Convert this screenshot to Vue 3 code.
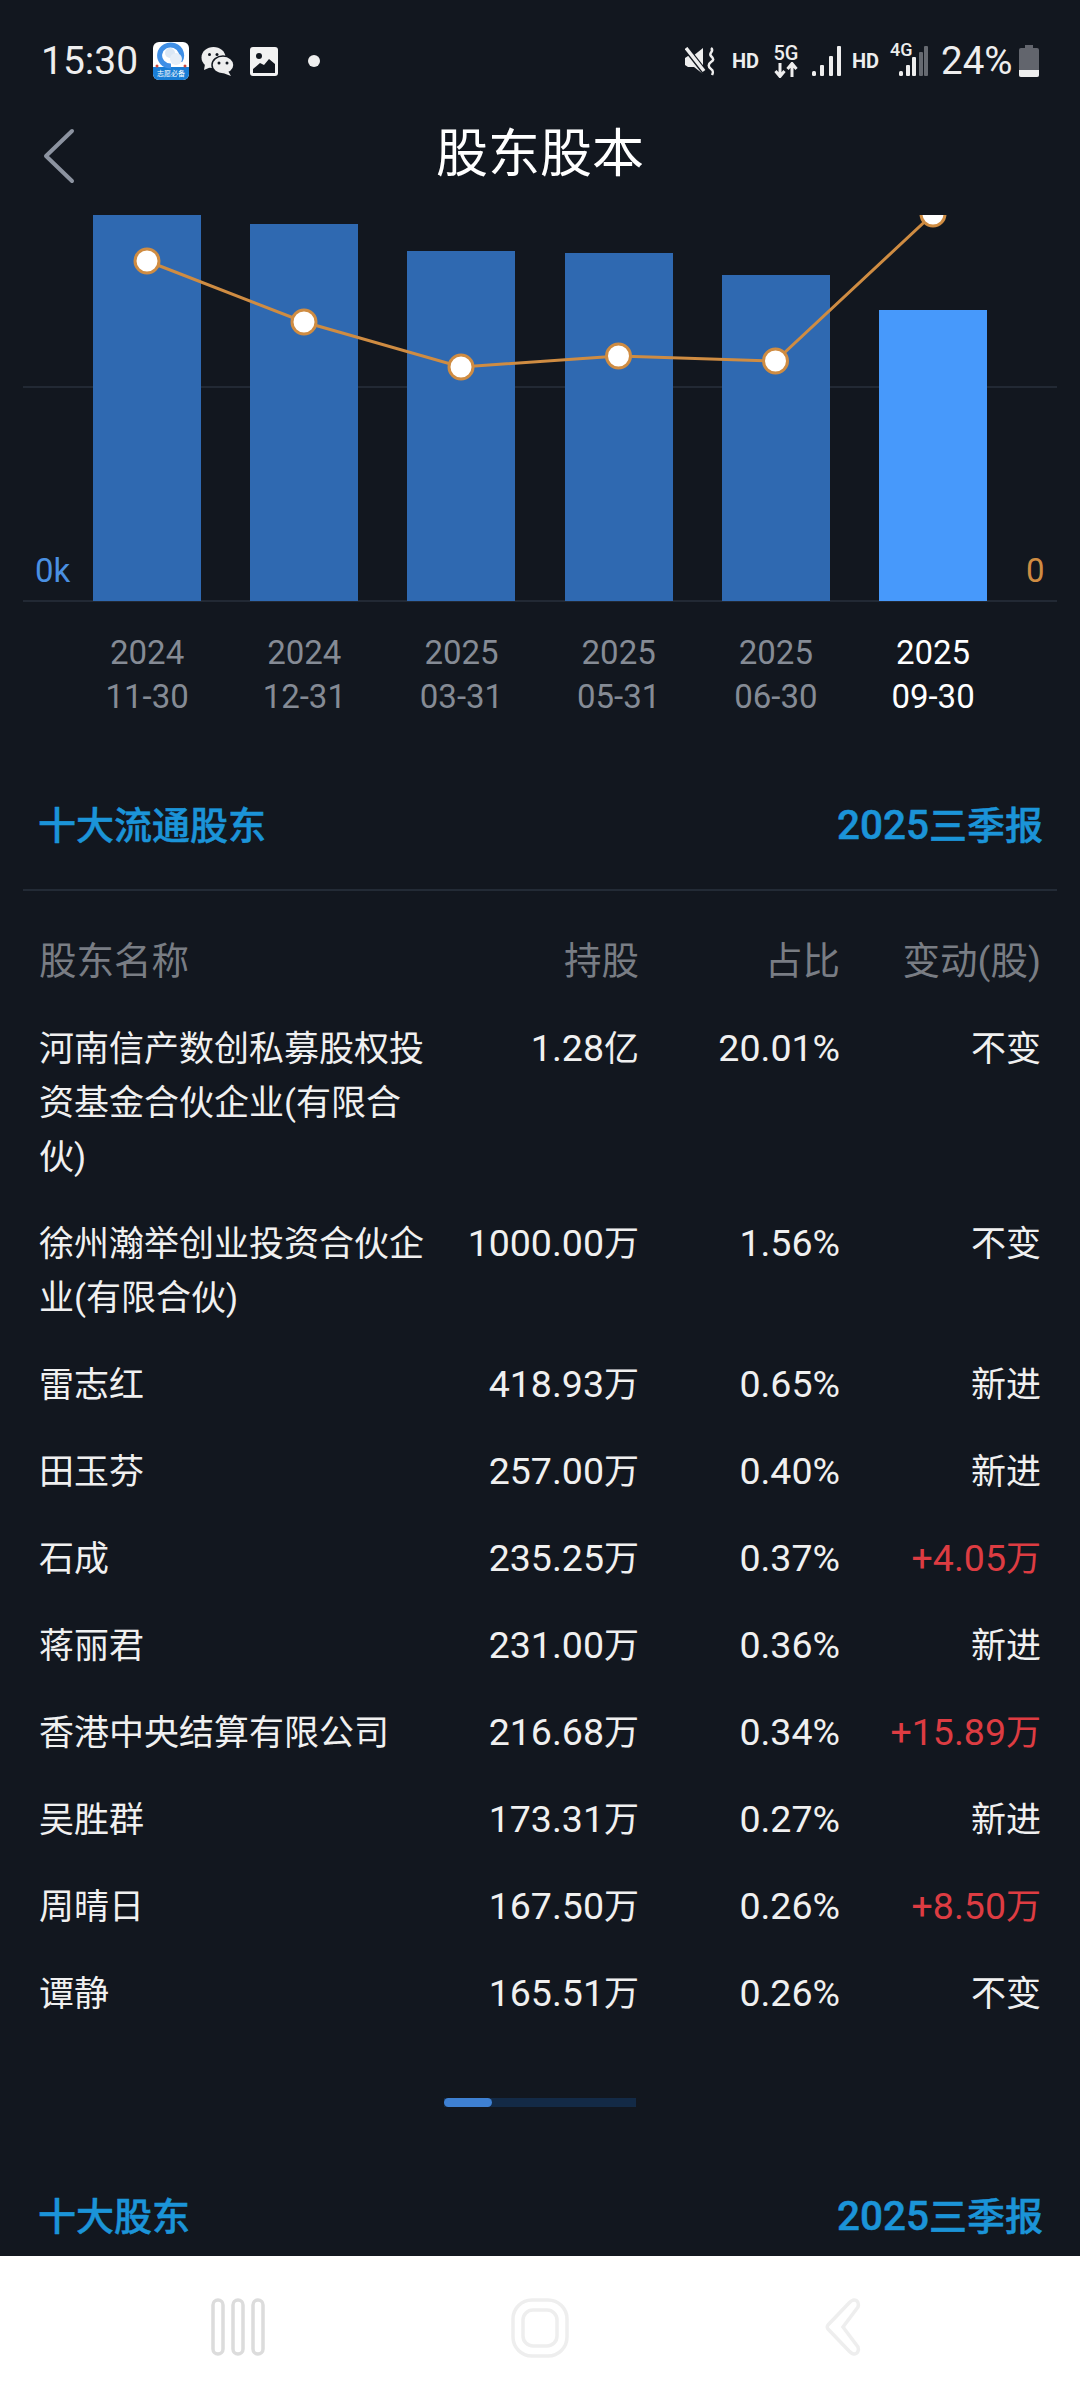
<script setup>
const bars = [
  { top: 0, y: '2024', d: '11-30' },
  { top: 9, y: '2024', d: '12-31' },
  { top: 36, y: '2025', d: '03-31' },
  { top: 38, y: '2025', d: '05-31' },
  { top: 60, y: '2025', d: '06-30' },
  { top: 95, y: '2025', d: '09-30', on: true }
]
const split = (s) => {
  const m = s.match(/^([^\u4e00-\u9fff]*)(.*)$/)
  return { num: m[1], unit: m[2] }
}
const rows = [
  { n: '河南信产数创私募股权投资基金合伙企业(有限合伙)', h: '1.28亿', p: '20.01%', c: '不变' },
  { n: '徐州瀚举创业投资合伙企业(有限合伙)', h: '1000.00万', p: '1.56%', c: '不变' },
  { n: '雷志红', h: '418.93万', p: '0.65%', c: '新进' },
  { n: '田玉芬', h: '257.00万', p: '0.40%', c: '新进' },
  { n: '石成', h: '235.25万', p: '0.37%', c: '+4.05万', r: true },
  { n: '蒋丽君', h: '231.00万', p: '0.36%', c: '新进' },
  { n: '香港中央结算有限公司', h: '216.68万', p: '0.34%', c: '+15.89万', r: true },
  { n: '吴胜群', h: '173.31万', p: '0.27%', c: '新进' },
  { n: '周晴日', h: '167.50万', p: '0.26%', c: '+8.50万', r: true },
  { n: '谭静', h: '165.51万', p: '0.26%', c: '不变' }
]
</script>

<template>
  <div class="page">
    <header class="status">
      <div class="st-left">
        <span class="time">15:30</span>
        <svg class="ic" width="36" height="38" viewBox="0 0 36 38"><rect width="36" height="38" rx="6" fill="#fff"/><path d="M0 25h36v7a6 6 0 0 1-6 6H6a6 6 0 0 1-6-6z" fill="#1a7ed6"/><path d="M27 19a11 10.500 0 1 0-9 5" fill="none" stroke="#3f8fe6" stroke-width="5"/><circle cx="17" cy="11" r="5" fill="#dbe7f4"/><circle cx="23" cy="17" r="6" fill="#e6eef7"/><circle cx="4" cy="24" r="1.500" fill="#d0473a"/><circle cx="32" cy="24" r="1.500" fill="#d0473a"/><text x="18" y="34" class="qq-t" text-anchor="middle">志愿必备</text></svg>
        <svg class="ic wc" width="33" height="29" viewBox="0 0 33 29"><ellipse cx="12.500" cy="10.500" rx="12" ry="10.500" fill="#eee"/><path d="M4 17l-1 6 7-3z" fill="#eee"/><ellipse cx="22" cy="18" rx="11" ry="9" fill="#eee" stroke="#12171f" stroke-width="1.500"/><path d="M27 24l3 5-8-3z" fill="#eee"/><circle cx="8.500" cy="7.500" r="1.500" fill="#12171f"/><circle cx="16" cy="7.500" r="1.500" fill="#12171f"/><circle cx="18" cy="16" r="1.500" fill="#12171f"/><circle cx="26" cy="16" r="1.500" fill="#12171f"/></svg>
        <svg class="ic im" width="28" height="29" viewBox="0 0 28 29"><rect width="28" height="29" rx="3" fill="#f2f2f2"/><circle cx="9" cy="9" r="3" fill="#12171f"/><path d="M3 26v-4l7-6 4 2 5-6 6 5v9z" fill="#12171f"/></svg>
        <span class="dot"></span>
      </div>
      <div class="st-right">
        <svg class="mute" width="30" height="29" viewBox="0 0 30 29"><path d="M0 11l3-2h5l10-8v26l-9-7H3l-3-2z" fill="#eee"/><path d="M0 0l22 28" stroke="#12171f" stroke-width="6"/><path d="M1 1l18 23" stroke="#eee" stroke-width="3.500"/><path d="M26 1c4 3-3 5 0 8s3 4 0 6-3 5 0 7 2 4 1 6" fill="none" stroke="#eee" stroke-width="2.500"/></svg>
        <span class="hd hd1">HD</span>
        <span class="net"><b>5G</b><svg width="24" height="16" viewBox="0 0 24 16"><path d="M6 1v12M1.500 9l4.500 5.500 4.500-5.500M18 15V3M13.500 7l4.500-5.500 4.500 5.500" stroke="#eee" stroke-width="3" fill="none"/></svg></span>
        <svg class="sig" width="29" height="30" viewBox="0 0 29 30"><g fill="#eee"><rect x="0" y="25" width="4" height="5" rx="1.500"/><rect x="8" y="19" width="4" height="11" rx="1"/><rect x="17" y="10" width="4" height="20" rx="1"/><rect x="25" y="0" width="4" height="30" rx="1"/></g></svg>
        <span class="hd hd2">HD</span>
        <span class="sig4"><b>4G</b><svg width="29" height="30" viewBox="0 0 29 30"><g fill="#eee"><rect x="0" y="25" width="4" height="5" rx="1.500"/><rect x="7" y="19" width="4" height="11" rx="1"/><rect x="13" y="11" width="4" height="19" rx="1"/></g><rect x="20" y="6" width="4" height="24" rx="1" fill="#666a71"/><rect x="25" y="0" width="4" height="30" rx="1" fill="#666a71"/></svg></span>
        <span class="pct">24%</span>
        <svg class="batt" width="20" height="32" viewBox="0 0 20 32"><path d="M6 0h8v3h4a2 2 0 0 1 2 2v25a2 2 0 0 1-2 2H2a2 2 0 0 1-2-2V5a2 2 0 0 1 2-2h4z" fill="#62656d"/><path d="M0 25h20v5a2 2 0 0 1-2 2H2a2 2 0 0 1-2-2z" fill="#eee"/></svg>
      </div>
    </header>

    <div class="nav">
      <svg class="back" width="32" height="56" viewBox="0 0 32 56"><path d="M29 3L3 28l26 25" fill="none" stroke="#8c93a0" stroke-width="4" stroke-linecap="round" stroke-linejoin="round"/></svg>
      <h1>股东股本</h1>
    </div>

    <section class="chart">
      <div class="plot">
        <div class="grid g1"></div>
        <div class="grid g2"></div>
        <span class="ax left">0k</span>
        <span class="ax right">0</span>
        <div class="bars">
          <div v-for="b in bars" :key="b.d" class="bar" :class="{ on: b.on }" :style="{ marginTop: b.top + 'px' }"></div>
        </div>
        <svg class="line" width="1080" height="387" viewBox="0 0 1080 387">
          <polyline points="147,46 304,107 461,152 618.500,141 775.500,146 933,-1" fill="none" stroke="#cf8c42" stroke-width="3"/>
          <g fill="#fff" stroke="#cf8c42" stroke-width="3">
            <circle cx="147" cy="46" r="12"/>
            <circle cx="304" cy="107" r="12"/>
            <circle cx="461" cy="152" r="12"/>
            <circle cx="618.500" cy="141" r="12"/>
            <circle cx="775.500" cy="146" r="12"/>
            <circle cx="933" cy="-1" r="12"/>
          </g>
        </svg>
      </div>
      <div class="labels">
        <div v-for="b in bars" :key="b.d" class="lab" :class="{ on: b.on }">
          <div>{{ b.y }}</div>
          <div>{{ b.d }}</div>
        </div>
      </div>
    </section>

    <div class="sec-head"><span>十大流通股东</span><span><i>2025</i>三季报</span></div>
    <div class="divider"></div>

    <div class="tbl">
      <div class="row head">
        <div class="c1">股东名称</div><div class="c2">持股</div><div class="c3">占比</div><div class="c4">变动(股)</div>
      </div>
      <div v-for="r in rows" :key="r.n" class="row">
        <div class="c1">{{ r.n }}</div>
        <div class="c2"><span class="num">{{ split(r.h).num }}</span>{{ split(r.h).unit }}</div>
        <div class="c3"><span class="num">{{ r.p }}</span></div>
        <div class="c4" :class="{ red: r.r }"><span class="num">{{ split(r.c).num }}</span>{{ split(r.c).unit }}</div>
      </div>
    </div>

    <div class="scroll"><span></span></div>

    <div class="sec-head second"><span>十大股东</span><span><i>2025</i>三季报</span></div>

    <footer class="sysnav">
      <svg width="54" height="58" viewBox="0 0 54 58"><g fill="none" stroke="#dcdcdc" stroke-width="3.500"><rect x="2" y="2" width="10" height="54" rx="5"/><rect x="22" y="2" width="10" height="54" rx="5"/><rect x="42" y="2" width="10" height="54" rx="5"/></g></svg>
      <svg width="58" height="60" viewBox="0 0 58 60"><g fill="none" stroke="#eeeeee" stroke-width="3.500"><rect x="2" y="2" width="54" height="56" rx="19"/><rect x="12" y="12" width="34" height="36" rx="10"/></g></svg>
      <svg width="38" height="58" viewBox="0 0 38 58"><path d="M31 2c4 0 5 4 4 7L20 29l15 20c1 3 0 7-4 7-2 0-3-1-5-3L5 31c-1-1-1-3 0-4L26 5c2-2 3-3 5-3z" fill="none" stroke="#eeeeee" stroke-width="3.500"/></svg>
    </footer>
  </div>
</template>

<style>
html, body { margin: 0; background: #12171f; }
</style>

<style scoped>
.page {
  width: 1080px;
  height: 2400px;
  background: #12171f;
  overflow: hidden;
  position: relative;
  display: flex;
  flex-direction: column;
  font-family: Roboto, "Noto Sans CJK SC", sans-serif;
  color: #fff;
}
.status { height: 108px; box-sizing: border-box; padding: 42px 41px 0 41px; display: flex; justify-content: space-between; align-items: flex-start; color: #eee; }
.st-left { display: flex; align-items: center; height: 38px; }
.time { font-size: 39px; line-height: 38px; font-weight: 400; width: 112px; }
.ic { display: block; }
.qq-t { font-size: 7px; fill: #fff; font-family: "Noto Sans CJK SC", sans-serif; }
.wc { margin-left: 12px; }
.im { margin-left: 16px; }
.dot { width: 12px; height: 12px; border-radius: 50%; background: #eee; margin-left: 30px; }
.st-right { display: flex; align-items: center; height: 38px; }
.mute { display: block; }
.hd { font-size: 20px; font-weight: 700; width: 26px; line-height: 22px; }
.hd1 { margin-left: 17px; }
.net { margin-left: 16px; width: 24px; display: flex; flex-direction: column; align-items: center; }
.net b { font-size: 20px; line-height: 18px; font-weight: 500; }
.net svg { display: block; }
.sig { margin-left: 14px; }
.hd2 { margin-left: 11px; }
.sig4 { position: relative; margin-left: 12px; width: 38px; height: 30px; display: flex; justify-content: flex-end; }
.sig4 b { position: absolute; left: 0; top: -5px; font-size: 18px; line-height: 18px; font-weight: 500; }
.pct { font-size: 38.500px; font-weight: 400; line-height: 38px; margin-left: 13px; width: 72px; }
.batt { margin-left: 6px; }

.nav { height: 107px; position: relative; display: flex; align-items: center; justify-content: center; }
.nav h1 { margin: 0; font-size: 52px; font-weight: 400; line-height: 60px; position: relative; top: -7px; }
.back { position: absolute; left: 43px; top: 20px; }

.plot { position: relative; height: 387px; overflow: hidden; }
.grid { position: absolute; left: 23px; width: 1034px; height: 2px; background: #222934; }
.g1 { top: 171px; }
.g2 { top: 385px; }
.ax { position: absolute; top: 338px; font-size: 33px; line-height: 36px; }
.left { left: 35px; color: #4a90e2; }
.right { left: 1026px; color: #cf8c42; }
.bars { position: absolute; left: 68.500px; top: 0; display: grid; grid-template-columns: repeat(6, 157.200px); justify-items: center; height: 386px; }
.bar { width: 108px; background: #2f69b1; }
.bar.on { background: #4799fb; }
.line { position: absolute; left: 0; top: 0; }
.labels { height: 199px; box-sizing: border-box; padding: 29px 0 0 68.500px; display: grid; grid-template-columns: repeat(6, 157.200px); align-content: start; }
.lab { text-align: center; font-size: 33px; line-height: 44px; color: #858b95; }
.lab.on { color: #fff; }

.sec-head { display: flex; justify-content: space-between; padding: 0 37px 0 38px; font-size: 38px; line-height: 50px; font-weight: 500; color: #1b94d8; -webkit-text-stroke: .5px #1b94d8; }
.sec-head span { display: block; }
.sec-head i { font-style: normal; font-size: 40.500px; line-height: 1; }
.divider { height: 2px; background: #232b36; margin: 38px 23px 0; }
.tbl { padding: 0 39px; margin-top: 43px; }
.row { display: grid; grid-template-columns: 390px 210px 201px 201px; font-size: 35px; line-height: 54px; color: #f0f0f0; padding-bottom: 33px; }
.row > div:not(.c1) { text-align: right; }
.row.head { font-size: 37.500px; color: #797d84; padding-bottom: 35px; }
.num { font-size: 37.500px; line-height: 1; }
.red { color: #dd3c42; }
.scroll { width: 192px; height: 9px; background: #132a46; margin: 43px auto 0; overflow: hidden; flex-shrink: 0; }
.scroll span { display: block; width: 48px; height: 9px; background: #3e80d2; border-radius: 5px; }
.second { margin-top: 85px; }
.sysnav { position: absolute; left: 0; right: 0; bottom: 0; height: 144px; background: #fff; }
.sysnav svg { position: absolute; top: 42px; }
.sysnav svg:nth-child(1) { left: 211px; }
.sysnav svg:nth-child(2) { left: 511px; }
.sysnav svg:nth-child(3) { left: 823px; }
</style>
